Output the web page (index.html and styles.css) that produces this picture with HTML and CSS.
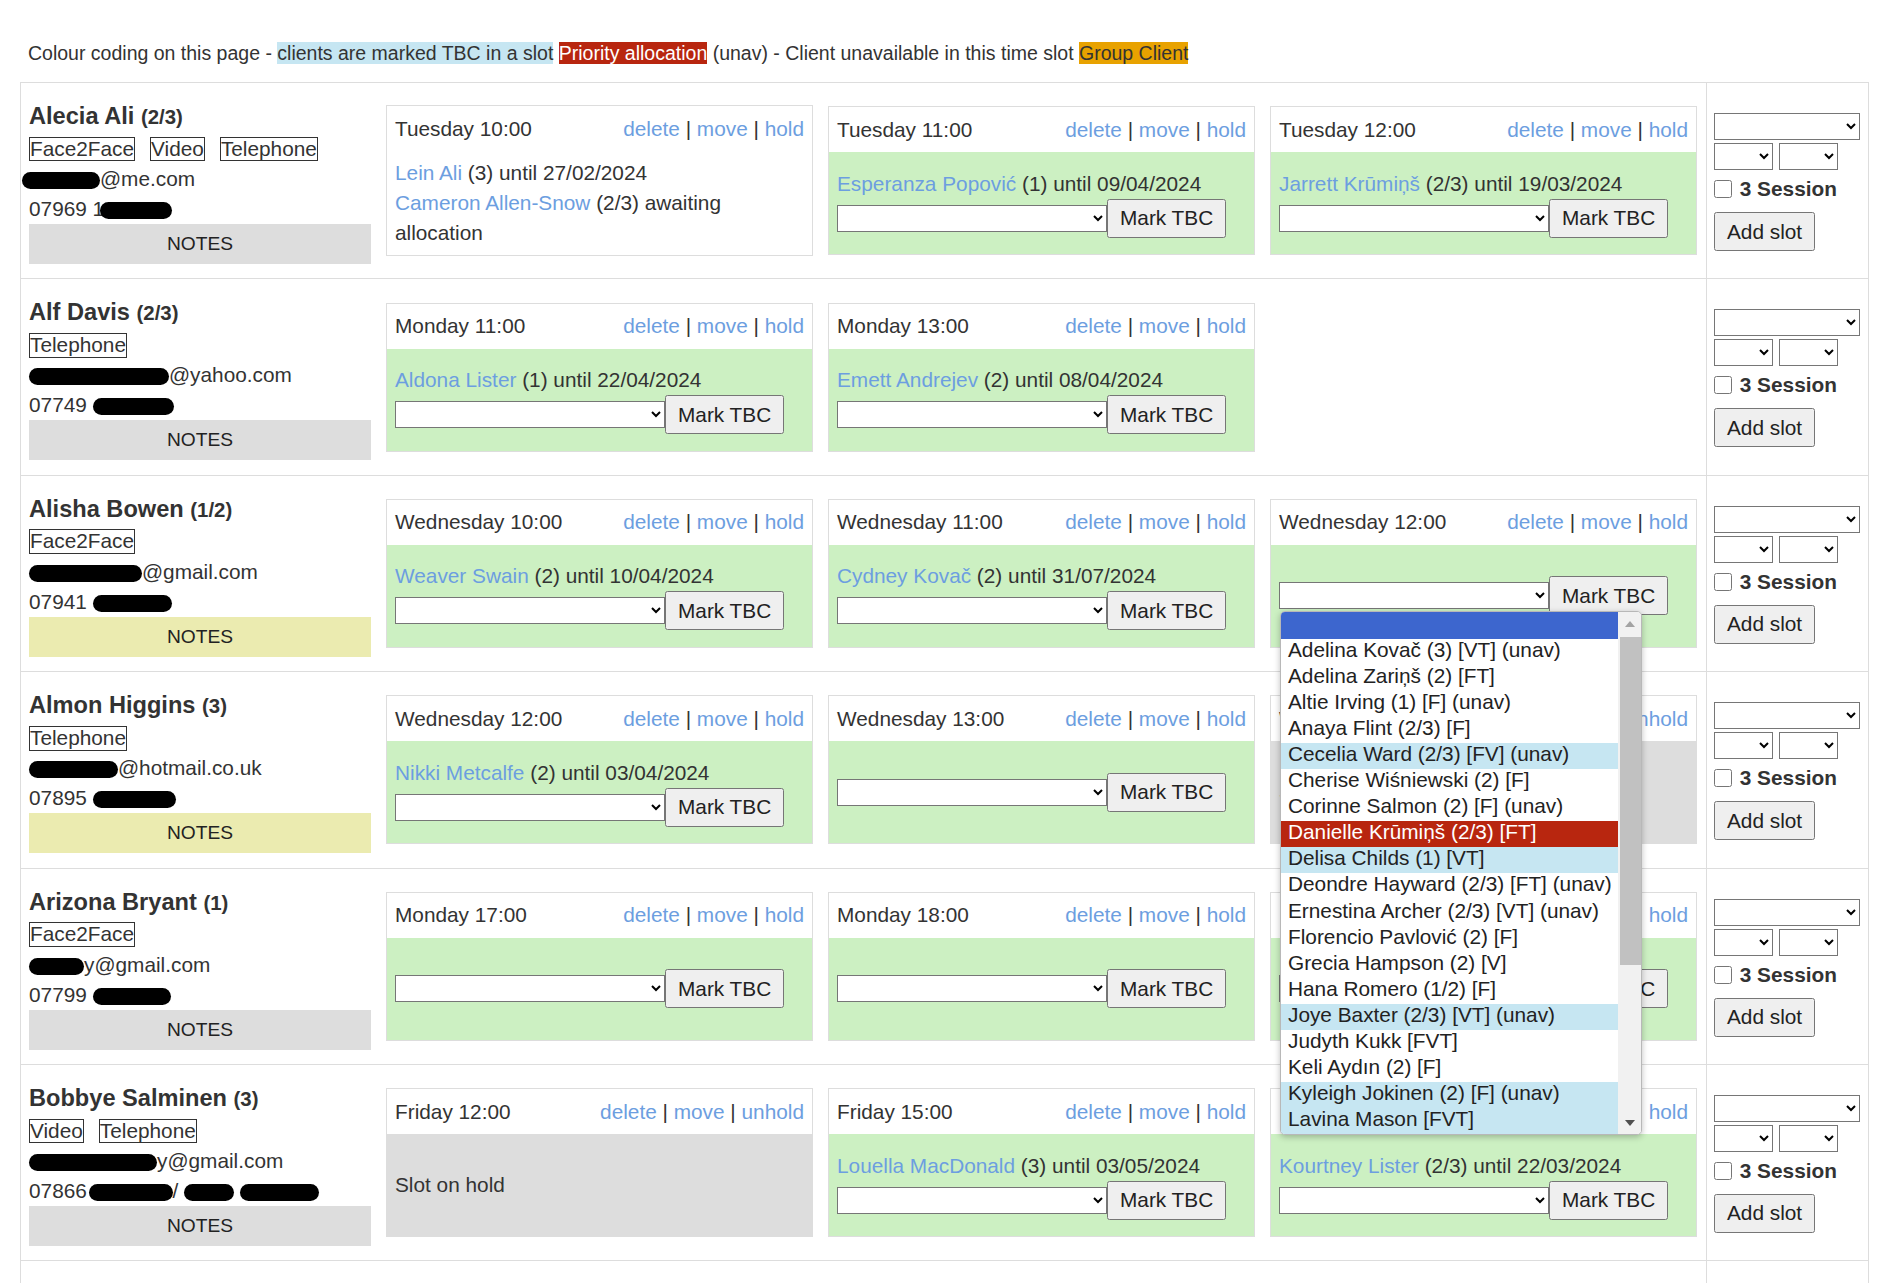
FILE: index.html
```html
<!DOCTYPE html>
<html lang="en">
<head>
<meta charset="utf-8">
<title>Slots</title>
<link rel="stylesheet" href="styles.css">
</head>
<body>
<p class="legend">Colour coding on this page - <span class="lg-tbc">clients are marked TBC in a slot</span> <span class="lg-pri">Priority allocation</span> (unav) - Client unavailable in this time slot <span class="lg-grp">Group Client</span></p>

<div class="table">

  <!-- Row 1 -->
  <div class="row">
    <div class="client">
      <div class="cname">Alecia Ali <span class="ccount">(2/3)</span></div>
      <div class="modes"><span class="mode">Face2Face</span><span class="mode">Video</span><span class="mode">Telephone</span></div>
      <div class="cline"><span class="rd rd-78 rd-pull7"></span>@me.com</div>
      <div class="cline">07969 1<span class="rd rd-72 rd-pull4"></span></div>
      <div class="notes">NOTES</div>
    </div>
    <div class="slots">
      <div class="card">
        <div class="chead"><span>Tuesday 10:00</span><span class="acts"><a>delete</a> | <a>move</a> | <a>hold</a></span></div>
        <div class="cbody">
          <div><a>Lein Ali</a> (3) until 27/02/2024</div>
          <div><a>Cameron Allen-Snow</a> (2/3) awaiting allocation</div>
        </div>
      </div>
      <div class="card">
        <div class="chead"><span>Tuesday 11:00</span><span class="acts"><a>delete</a> | <a>move</a> | <a>hold</a></span></div>
        <div class="cbody green">
          <div><a>Esperanza Popović</a> (1) until 09/04/2024</div>
          <div class="form"><select class="pick"><option></option></select><button class="btn">Mark TBC</button></div>
        </div>
      </div>
      <div class="card">
        <div class="chead"><span>Tuesday 12:00</span><span class="acts"><a>delete</a> | <a>move</a> | <a>hold</a></span></div>
        <div class="cbody green">
          <div><a>Jarrett Krūmiņš</a> (2/3) until 19/03/2024</div>
          <div class="form"><select class="pick"><option></option></select><button class="btn">Mark TBC</button></div>
        </div>
      </div>
    </div>
    <div class="addcol">
      <select class="day"><option></option></select>
      <div class="times"><select class="t"><option></option></select><select class="t"><option></option></select></div>
      <label class="sess"><input type="checkbox"> 3 Session</label>
      <button class="btn add">Add slot</button>
    </div>
  </div>

  <!-- Row 2 -->
  <div class="row">
    <div class="client">
      <div class="cname">Alf Davis <span class="ccount">(2/3)</span></div>
      <div class="modes"><span class="mode">Telephone</span></div>
      <div class="cline"><span class="rd rd-140"></span>@yahoo.com</div>
      <div class="cline">07749 <span class="rd rd-81"></span></div>
      <div class="notes">NOTES</div>
    </div>
    <div class="slots">
      <div class="card">
        <div class="chead"><span>Monday 11:00</span><span class="acts"><a>delete</a> | <a>move</a> | <a>hold</a></span></div>
        <div class="cbody green">
          <div><a>Aldona Lister</a> (1) until 22/04/2024</div>
          <div class="form"><select class="pick"><option></option></select><button class="btn">Mark TBC</button></div>
        </div>
      </div>
      <div class="card">
        <div class="chead"><span>Monday 13:00</span><span class="acts"><a>delete</a> | <a>move</a> | <a>hold</a></span></div>
        <div class="cbody green">
          <div><a>Emett Andrejev</a> (2) until 08/04/2024</div>
          <div class="form"><select class="pick"><option></option></select><button class="btn">Mark TBC</button></div>
        </div>
      </div>
    </div>
    <div class="addcol">
      <select class="day"><option></option></select>
      <div class="times"><select class="t"><option></option></select><select class="t"><option></option></select></div>
      <label class="sess"><input type="checkbox"> 3 Session</label>
      <button class="btn add">Add slot</button>
    </div>
  </div>

  <!-- Row 3 -->
  <div class="row">
    <div class="client">
      <div class="cname">Alisha Bowen <span class="ccount">(1/2)</span></div>
      <div class="modes"><span class="mode">Face2Face</span></div>
      <div class="cline"><span class="rd rd-113"></span>@gmail.com</div>
      <div class="cline">07941 <span class="rd rd-79"></span></div>
      <div class="notes yellow">NOTES</div>
    </div>
    <div class="slots">
      <div class="card">
        <div class="chead"><span>Wednesday 10:00</span><span class="acts"><a>delete</a> | <a>move</a> | <a>hold</a></span></div>
        <div class="cbody green">
          <div><a>Weaver Swain</a> (2) until 10/04/2024</div>
          <div class="form"><select class="pick"><option></option></select><button class="btn">Mark TBC</button></div>
        </div>
      </div>
      <div class="card">
        <div class="chead"><span>Wednesday 11:00</span><span class="acts"><a>delete</a> | <a>move</a> | <a>hold</a></span></div>
        <div class="cbody green">
          <div><a>Cydney Kovač</a> (2) until 31/07/2024</div>
          <div class="form"><select class="pick"><option></option></select><button class="btn">Mark TBC</button></div>
        </div>
      </div>
      <div class="card">
        <div class="chead"><span>Wednesday 12:00</span><span class="acts"><a>delete</a> | <a>move</a> | <a>hold</a></span></div>
        <div class="cbody green">
          <div class="form">
            <span class="ddwrap">
              <select class="pick"><option></option></select>
              <div class="dropdown">
                <div class="ddlist">
                  <div class="dditem sel"></div>
                  <div class="dditem">Adelina Kovač (3) [VT] (unav)</div>
                  <div class="dditem">Adelina Zariņš (2) [FT]</div>
                  <div class="dditem">Altie Irving (1) [F] (unav)</div>
                  <div class="dditem">Anaya Flint (2/3) [F]</div>
                  <div class="dditem tbc">Cecelia Ward (2/3) [FV] (unav)</div>
                  <div class="dditem">Cherise Wiśniewski (2) [F]</div>
                  <div class="dditem">Corinne Salmon (2) [F] (unav)</div>
                  <div class="dditem pri">Danielle Krūmiņš (2/3) [FT]</div>
                  <div class="dditem tbc">Delisa Childs (1) [VT]</div>
                  <div class="dditem">Deondre Hayward (2/3) [FT] (unav)</div>
                  <div class="dditem">Ernestina Archer (2/3) [VT] (unav)</div>
                  <div class="dditem">Florencio Pavlović (2) [F]</div>
                  <div class="dditem">Grecia Hampson (2) [V]</div>
                  <div class="dditem">Hana Romero (1/2) [F]</div>
                  <div class="dditem tbc">Joye Baxter (2/3) [VT] (unav)</div>
                  <div class="dditem">Judyth Kukk [FVT]</div>
                  <div class="dditem">Keli Aydın (2) [F]</div>
                  <div class="dditem tbc">Kyleigh Jokinen (2) [F] (unav)</div>
                  <div class="dditem tbc">Lavina Mason [FVT]</div>
                </div>
                <div class="ddbar">
                  <span class="arr-up"></span>
                  <span class="thumb"></span>
                  <span class="arr-down"></span>
                </div>
              </div>
            </span>
            <button class="btn">Mark TBC</button>
          </div>
        </div>
      </div>
    </div>
    <div class="addcol">
      <select class="day"><option></option></select>
      <div class="times"><select class="t"><option></option></select><select class="t"><option></option></select></div>
      <label class="sess"><input type="checkbox"> 3 Session</label>
      <button class="btn add">Add slot</button>
    </div>
  </div>

  <!-- Row 4 -->
  <div class="row">
    <div class="client">
      <div class="cname">Almon Higgins <span class="ccount">(3)</span></div>
      <div class="modes"><span class="mode">Telephone</span></div>
      <div class="cline"><span class="rd rd-89"></span>@hotmail.co.uk</div>
      <div class="cline">07895 <span class="rd rd-83"></span></div>
      <div class="notes yellow">NOTES</div>
    </div>
    <div class="slots">
      <div class="card">
        <div class="chead"><span>Wednesday 12:00</span><span class="acts"><a>delete</a> | <a>move</a> | <a>hold</a></span></div>
        <div class="cbody green">
          <div><a>Nikki Metcalfe</a> (2) until 03/04/2024</div>
          <div class="form"><select class="pick"><option></option></select><button class="btn">Mark TBC</button></div>
        </div>
      </div>
      <div class="card">
        <div class="chead"><span>Wednesday 13:00</span><span class="acts"><a>delete</a> | <a>move</a> | <a>hold</a></span></div>
        <div class="cbody green">
          <div class="form"><select class="pick"><option></option></select><button class="btn">Mark TBC</button></div>
        </div>
      </div>
      <div class="card">
        <div class="chead"><span>Wednesday 14:00</span><span class="acts"><a>delete</a> | <a>move</a> | <a>unhold</a></span></div>
        <div class="cbody hold">
          <div>Slot on hold</div>
        </div>
      </div>
    </div>
    <div class="addcol">
      <select class="day"><option></option></select>
      <div class="times"><select class="t"><option></option></select><select class="t"><option></option></select></div>
      <label class="sess"><input type="checkbox"> 3 Session</label>
      <button class="btn add">Add slot</button>
    </div>
  </div>

  <!-- Row 5 -->
  <div class="row">
    <div class="client">
      <div class="cname">Arizona Bryant <span class="ccount">(1)</span></div>
      <div class="modes"><span class="mode">Face2Face</span></div>
      <div class="cline"><span class="rd rd-55"></span>y@gmail.com</div>
      <div class="cline">07799 <span class="rd rd-78"></span></div>
      <div class="notes">NOTES</div>
    </div>
    <div class="slots">
      <div class="card">
        <div class="chead"><span>Monday 17:00</span><span class="acts"><a>delete</a> | <a>move</a> | <a>hold</a></span></div>
        <div class="cbody green">
          <div class="form"><select class="pick"><option></option></select><button class="btn">Mark TBC</button></div>
        </div>
      </div>
      <div class="card">
        <div class="chead"><span>Monday 18:00</span><span class="acts"><a>delete</a> | <a>move</a> | <a>hold</a></span></div>
        <div class="cbody green">
          <div class="form"><select class="pick"><option></option></select><button class="btn">Mark TBC</button></div>
        </div>
      </div>
      <div class="card">
        <div class="chead"><span>Monday 19:00</span><span class="acts"><a>delete</a> | <a>move</a> | <a>hold</a></span></div>
        <div class="cbody green">
          <div class="form"><select class="pick"><option></option></select><button class="btn">Mark TBC</button></div>
        </div>
      </div>
    </div>
    <div class="addcol">
      <select class="day"><option></option></select>
      <div class="times"><select class="t"><option></option></select><select class="t"><option></option></select></div>
      <label class="sess"><input type="checkbox"> 3 Session</label>
      <button class="btn add">Add slot</button>
    </div>
  </div>

  <!-- Row 6 -->
  <div class="row">
    <div class="client">
      <div class="cname">Bobbye Salminen <span class="ccount">(3)</span></div>
      <div class="modes"><span class="mode">Video</span><span class="mode">Telephone</span></div>
      <div class="cline"><span class="rd rd-128"></span>y@gmail.com</div>
      <div class="cline">07866 <span class="rd rd-84 rd-pull4"></span>/ <span class="rd rd-50"></span> <span class="rd rd-79"></span></div>
      <div class="notes">NOTES</div>
    </div>
    <div class="slots">
      <div class="card">
        <div class="chead"><span>Friday 12:00</span><span class="acts"><a>delete</a> | <a>move</a> | <a>unhold</a></span></div>
        <div class="cbody hold">
          <div>Slot on hold</div>
        </div>
      </div>
      <div class="card">
        <div class="chead"><span>Friday 15:00</span><span class="acts"><a>delete</a> | <a>move</a> | <a>hold</a></span></div>
        <div class="cbody green">
          <div><a>Louella MacDonald</a> (3) until 03/05/2024</div>
          <div class="form"><select class="pick"><option></option></select><button class="btn">Mark TBC</button></div>
        </div>
      </div>
      <div class="card">
        <div class="chead"><span>Friday 16:00</span><span class="acts"><a>delete</a> | <a>move</a> | <a>hold</a></span></div>
        <div class="cbody green">
          <div><a>Kourtney Lister</a> (2/3) until 22/03/2024</div>
          <div class="form"><select class="pick"><option></option></select><button class="btn">Mark TBC</button></div>
        </div>
      </div>
    </div>
    <div class="addcol">
      <select class="day"><option></option></select>
      <div class="times"><select class="t"><option></option></select><select class="t"><option></option></select></div>
      <label class="sess"><input type="checkbox"> 3 Session</label>
      <button class="btn add">Add slot</button>
    </div>
  </div>

  <!-- Row 7 (continues below the fold) -->
  <div class="row">
    <div class="client"></div>
    <div class="slots"></div>
    <div class="addcol"></div>
  </div>

</div>
</body>
</html>
```

FILE: styles.css
```css
* { box-sizing: border-box; }

body {
  margin: 0;
  font-family: "Liberation Sans", Arial, sans-serif;
  color: #333;
  background: #fff;
}

a { color: #6c9ee0; cursor: pointer; }

/* legend */
.legend {
  margin: 0;
  height: 82px;
  padding: 42px 0 0 28px;
  font-size: 19.5px;
  line-height: 22px;
  white-space: nowrap;
}
.lg-tbc { background: #c6e6f2; }
.lg-pri { background: #b8260f; color: #fff; }
.lg-grp { background: #e8a200; }

/* table */
.table {
  margin-left: 20px;
  width: 1849px;
  border: 1px solid #ddd;
  border-bottom: none;
}
.row {
  display: grid;
  grid-template-columns: 358px 1327px 162px;
  height: 196.4px;
  border-bottom: 1px solid #ddd;
}

/* client column */
.client {
  padding: 20px 0 0 8px;
}
.cname {
  height: 31px;
  font-size: 23.6px;
  line-height: 27px;
  font-weight: bold;
  white-space: nowrap;
}
.ccount { font-size: 20.4px; }
.modes {
  display: flex;
  align-items: center;
  gap: 15px;
  height: 30px;
  font-size: 20.8px;
}
.mode {
  border: 1px solid #333;
  line-height: 22.7px;
}
.cline {
  height: 30px;
  font-size: 20.8px;
  line-height: 30px;
  white-space: nowrap;
}
.rd {
  display: inline-block;
  height: 17px;
  background: #000;
  border-radius: 9px;
  vertical-align: -3px;
}
.rd-pull7 { margin-left: -7px; }
.rd-pull4 { margin-left: -4px; }
.rd-50 { width: 50px; }
.rd-55 { width: 55px; }
.rd-72 { width: 72px; }
.rd-78 { width: 78px; }
.rd-79 { width: 79px; }
.rd-81 { width: 81px; }
.rd-83 { width: 83px; }
.rd-84 { width: 84px; }
.rd-89 { width: 89px; }
.rd-113 { width: 113px; }
.rd-128 { width: 128px; }
.rd-140 { width: 140px; }

.notes {
  width: 342px;
  height: 40px;
  background: #ddd;
  font-size: 19.2px;
  line-height: 40px;
  text-align: center;
  color: #222;
}
.notes.yellow { background: #ebebb0; }

/* slot cards */
.slots {
  display: flex;
  align-items: center;
  gap: 15px;
  padding-left: 7px;
}
.card {
  width: 427px;
  border: 1px solid #ddd;
  display: flex;
  flex-direction: column;
  background: #fff;
}
.chead {
  height: 45px;
  padding: 0 8px;
  display: flex;
  align-items: center;
  justify-content: space-between;
  font-size: 20.8px;
  white-space: nowrap;
}
.cbody {
  min-height: 102px;
  padding: 7px 8px;
  display: flex;
  flex-direction: column;
  justify-content: center;
  font-size: 20.8px;
  line-height: 30px;
}
.cbody.green { background: #ccf0c2; }
.cbody.hold { background: #ddd; }

.form {
  display: flex;
  align-items: center;
  height: 39px;
}
.pick {
  width: 270px;
  height: 27px;
  margin: 0;
  font-size: 16px;
  background: #fff;
}
.btn {
  height: 39px;
  margin: 0;
  padding: 0 11px;
  font-family: "Liberation Sans", Arial, sans-serif;
  font-size: 20.8px;
  line-height: 24px;
  white-space: nowrap;
  color: #222;
}

/* add column */
.addcol {
  border-left: 1px solid #ddd;
  padding: 30px 0 0 7px;
}
.day {
  display: block;
  width: 146px;
  height: 27px;
  margin: 0;
  background: #fff;
}
.times {
  display: flex;
  gap: 6px;
  margin-top: 3px;
}
.t {
  width: 59px;
  height: 27px;
  margin: 0;
  background: #fff;
}
.sess {
  display: flex;
  align-items: center;
  height: 30px;
  margin-top: 4px;
  font-size: 20.8px;
  font-weight: bold;
  white-space: pre;
}
.sess input {
  width: 18px;
  height: 18px;
  margin: 0 2px 0 0;
}
.add {
  display: block;
  margin-top: 8px;
}

/* open dropdown */
.ddwrap {
  position: relative;
  display: flex;
}
.dropdown {
  position: absolute;
  left: 1px;
  top: 29px;
  width: 362px;
  height: 524px;
  z-index: 10;
  display: flex;
  background: #fff;
  border: 1px solid #b8b8b8;
  border-radius: 5px;
  box-shadow: 0 2px 6px rgba(0, 0, 0, 0.25);
  overflow: hidden;
}
.ddlist {
  flex: 1;
  overflow: hidden;
}
.dditem {
  height: 26.1px;
  line-height: 22px;
  padding-left: 7px;
  font-size: 20.8px;
  white-space: nowrap;
  color: #222;
}
.dditem.sel { background: #3d66ce; }
.dditem.tbc { background: #c6e6f2; }
.dditem.pri { background: #b8260f; color: #fff; }

.ddbar {
  position: relative;
  width: 23px;
  background: #f1f1f1;
}
.thumb {
  position: absolute;
  left: 2px;
  right: 0;
  top: 25px;
  height: 328px;
  background: #c1c1c1;
}
.arr-up, .arr-down {
  position: absolute;
  left: 7px;
  width: 0;
  height: 0;
  border-left: 5px solid transparent;
  border-right: 5px solid transparent;
}
.arr-up {
  top: 9px;
  border-bottom: 6px solid #a3a3a3;
}
.arr-down {
  bottom: 8px;
  border-top: 6px solid #505050;
}
```
